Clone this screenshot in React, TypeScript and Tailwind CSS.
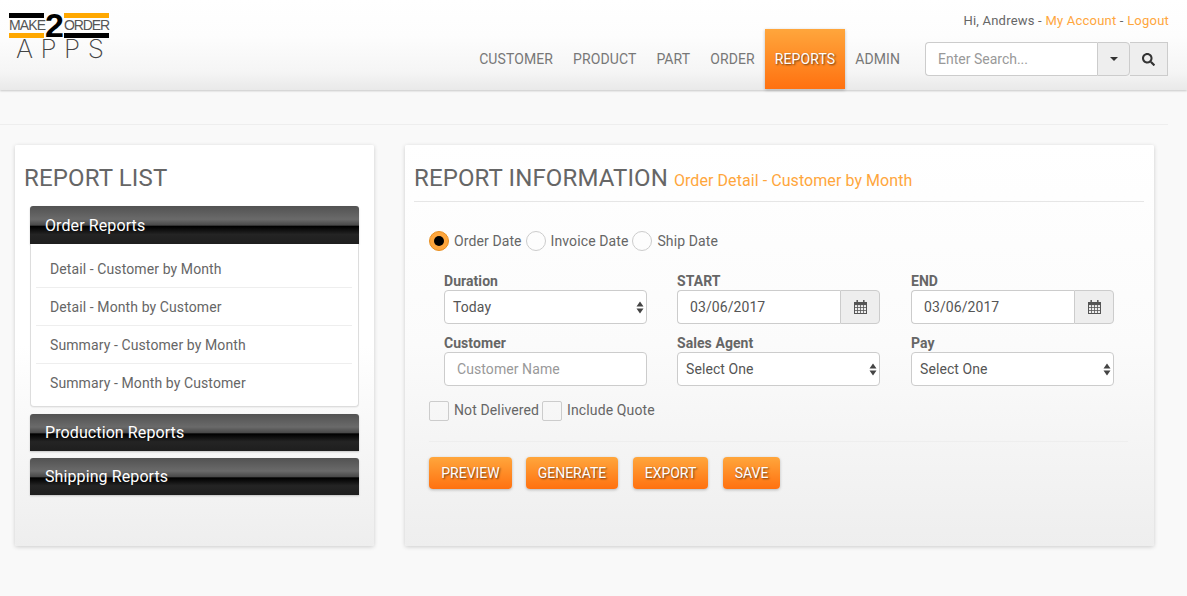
import React from "react";
import { FaSearch } from "react-icons/fa";

const nav = ["CUSTOMER", "PRODUCT", "PART", "ORDER", "REPORTS", "ADMIN"];
const reports = ["Detail - Customer by Month", "Detail - Month by Customer", "Summary - Customer by Month", "Summary - Month by Customer"];
const heading = "flex items-center pl-[15.5px] text-white text-[16px] rounded-t-[3px] tracking-[0.1px] bg-[linear-gradient(#525252_0%,#6a6a6a_35%,#4a4a4a_50%,#000_54%,#242424_75%,#1e1e1e_100%)] shadow-[0_1px_2px_rgba(0,0,0,0.2)]";
const field = "h-[34px] border border-[#ccc] rounded-[4px] bg-white text-[14px] text-[#555] tracking-[0.08px]";
const btn = "h-[32px] rounded-[4px] text-white text-[14px] flex items-center justify-center bg-[linear-gradient(#ffa63c,#ff7110)] shadow-[0_1px_3px_rgba(0,0,0,0.25)] [text-shadow:1px_1px_2px_rgba(0,0,0,0.6)]";

function Arrows() {
  return (
    <svg className="absolute right-[2px] top-[10px] w-[8px] h-[13px]" viewBox="0 0 8 13">
      <path d="M4 0.5 L7.5 5.5 H0.5 Z M4 12.5 L0.5 7.5 H7.5 Z" fill="#444" />
    </svg>
  );
}

function Calendar() {
  return (
    <svg width="13" height="14" viewBox="0 0 13 14" fill="none" stroke="#555" strokeWidth="1">
      <rect x="0.5" y="2.5" width="12" height="11" />
      <path d="M0.5 4 H12.5" strokeWidth="2.2" />
      <path d="M0.5 7.5 H12.5 M0.5 10.5 H12.5 M3.5 5 V13.5 M6.5 5 V13.5 M9.5 5 V13.5" strokeWidth="0.8" />
      <path d="M3.2 0 V3 M9.8 0 V3" strokeWidth="1.5" />
    </svg>
  );
}

function Select({ value }: { value: string }) {
  return (
    <div className={`${field} relative flex items-center pl-[8px] pr-[2px]`}>
      <span>{value}</span>
      <Arrows />
    </div>
  );
}

function DateField() {
  return (
    <div className="flex h-[34px] text-[14px] text-[#555] tracking-[0.08px]">
      <div className="flex-1 border border-r-0 border-[#ccc] rounded-l-[4px] bg-white flex items-center pl-[12px]">03/06/2017</div>
      <div className="w-[40px] border border-[#ccc] rounded-r-[4px] bg-[#eee] flex items-center justify-center">
        <Calendar />
      </div>
    </div>
  );
}

function Radio({ label, checked }: { label: string; checked?: boolean }) {
  return (
    <div className="flex items-center gap-[5px]">
      {checked ? (
        <span className="w-[20px] h-[20px] rounded-full border border-[#e88f20] bg-[#ffa63c] flex items-center justify-center">
          <span className="w-[10px] h-[10px] rounded-full bg-black" />
        </span>
      ) : (
        <span className="w-[20px] h-[20px] rounded-full border border-[#ccc]" />
      )}
      <span className="tracking-[0.1px]">{label}</span>
    </div>
  );
}

function Check({ label }: { label: string }) {
  return (
    <div className="flex items-center gap-[5px]">
      <span className="w-[20px] h-[20px] rounded-[2px] border border-[#ccc]" />
      <span className="tracking-[0.12px] pb-[2px]">{label}</span>
    </div>
  );
}

function Field({ label, children }: { label: string; children: React.ReactNode }) {
  return (
    <div className="w-[203px]">
      <div className="h-[20px] text-[14px] font-bold text-[#666] leading-[20px] -mb-[1px] tracking-[0.06px]">{label}</div>
      {children}
    </div>
  );
}

function Logo() {
  return (
    <div className="ml-[9px] mt-[13px] w-[100px] font-['Liberation_Sans',sans-serif]">
      <div className="flex h-[25px] items-stretch">
        <div className="w-[35px] flex flex-col justify-between">
          <div className="h-[5px] bg-black" />
          <div className="text-[14px] leading-[13px] text-[#555] tracking-[-0.9px] whitespace-nowrap">MAKE</div>
          <div className="h-[5px] bg-[#ffa800]" />
        </div>
        <div className="w-[19px] ml-[1px] text-[34px] font-bold leading-[24px] text-black text-center">2</div>
        <div className="w-[45px] flex flex-col justify-between">
          <div className="h-[5px] bg-[#ffa800]" />
          <div className="text-[14px] leading-[13px] text-[#555] tracking-[-1.1px] whitespace-nowrap">ORDER</div>
          <div className="h-[5px] bg-black" />
        </div>
      </div>
      <div className="pl-[7px] text-[26px] leading-[21px] text-[#444] font-['Inter',sans-serif] font-extralight tracking-[7.5px] whitespace-nowrap">APPS</div>
    </div>
  );
}

export default function App() {
  return (
    <div className="h-[596px] overflow-hidden bg-[#f9f9f9] font-['Roboto',sans-serif] text-[#666] text-[14px]">
      <header className="h-[90px] flex justify-between bg-[linear-gradient(#fff_0%,#fdfdfd_40%,#f5f5f5_80%,#e9e9e9_100%)] shadow-[0_1px_2px_rgba(0,0,0,0.2)]">
        <Logo />
        <div className="pr-[19px] flex flex-col items-end">
          <div className="h-[29px] pt-[12px] -mr-[1px] leading-[18px] text-[13px] text-[#666] tracking-[0.22px]">
            Hi, Andrews - <span className="text-[#ffa63c]">My Account</span> - <span className="text-[#ffa63c]">Logout</span>
          </div>
          <div className="flex items-start">
            <nav className="flex h-[60px] tracking-[0.1px] -mr-[1px]">
              {nav.map((n) =>
                n === "REPORTS" ? (
                  <div key={n} className="px-[10px] flex items-center text-white bg-[linear-gradient(#ffa63c,#ff7110)] shadow-[0_1px_3px_rgba(0,0,0,0.25)] [text-shadow:1px_1px_2px_rgba(0,0,0,0.6)]">{n}</div>
                ) : (
                  <div key={n} className="px-[10px] flex items-center text-[#777]">{n}</div>
                )
              )}
            </nav>
            <div className="ml-[16px] mt-[13px] flex h-[34px]">
              <div className="w-[172px] border border-r-0 border-[#ccc] rounded-l-[4px] bg-white flex items-center pl-[12px] text-[#999]">Enter Search...</div>
              <div className="w-[33px] border border-[#ccc] rounded-r-[4px] bg-[#eee] flex items-center justify-center">
                <svg width="8" height="4" viewBox="0 0 8 4"><path d="M0 0 H8 L4 4 Z" fill="#333" /></svg>
              </div>
              <div className="w-[38px] border border-l-0 border-[#ccc] bg-[#eee] flex items-center justify-center text-[#333]">
                <FaSearch size={13} />
              </div>
            </div>
          </div>
        </div>
      </header>

      <div className="h-[35px] w-[1168px] border-b border-[#eee]" />

      <main className="mt-[20px] pl-[15px] flex gap-[31px] items-start">
        <section className="w-[359px] h-[401px] rounded-[2px] pt-[19px] px-[9px] bg-[linear-gradient(#fff_0%,#fff_50%,#eee_100%)] shadow-[0_1px_4px_rgba(0,0,0,0.18)]">
          <h2 className="text-[24px] leading-[28px] text-[#666] tracking-[0.15px]">REPORT LIST</h2>
          <div className="mt-[14px] ml-[5.5px] w-[329px] flex flex-col gap-[7px]">
            <div>
              <div className={`${heading} h-[38px] pt-[1px]`}>Order Reports</div>
              <div className="h-[163px] bg-white rounded-b-[4px] border border-t-0 border-[#ddd] pl-[5px] pr-[6px] pt-[6px] shadow-[0_1px_1px_rgba(0,0,0,0.05)]">
                {reports.map((r, i) => (
                  <div key={r} className={`h-[38px] pl-[14.5px] pt-[1px] flex items-center tracking-[0.1px] text-[#666] ${i < 3 ? "border-b border-[#eee]" : ""}`}>{r}</div>
                ))}
              </div>
            </div>
            <div className={`${heading} h-[37px]`}>Production Reports</div>
            <div className={`${heading} h-[37px]`}>Shipping Reports</div>
          </div>
        </section>

        <section className="w-[749px] h-[401px] rounded-[2px] pt-[19px] px-[9px] bg-[linear-gradient(#fff_0%,#fbfbfb_50%,#eee_100%)] shadow-[0_1px_4px_rgba(0,0,0,0.18)]">
          <div className="flex items-baseline gap-[6px] w-[730px] h-[38px] border-b border-[#e6e6e6]">
            <h2 className="text-[24px] leading-[28px] text-[#666] tracking-[0.12px]">REPORT INFORMATION</h2>
            <span className="text-[16px] text-[#ffa63c] tracking-[0.07px]">Order Detail - Customer by Month</span>
          </div>
          <div className="pl-[15px] w-[730px]">
            <div className="mt-[29px] flex items-center gap-[4px] h-[20px]">
              <Radio label="Order Date" checked />
              <Radio label="Invoice Date" />
              <Radio label="Ship Date" />
            </div>
            <div className="mt-[20px] ml-[15px] grid grid-cols-[233px_234px_203px] gap-y-[9px] text-[14px]">
              <Field label="Duration"><Select value="Today" /></Field>
              <Field label="START"><DateField /></Field>
              <Field label="END"><DateField /></Field>
              <Field label="Customer">
                <div className={`${field} flex items-center pl-[12px] text-[#999]`}>Customer Name</div>
              </Field>
              <Field label="Sales Agent"><Select value="Select One" /></Field>
              <Field label="Pay"><Select value="Select One" /></Field>
            </div>
            <div className="mt-[15px] flex items-center gap-[3px] h-[20px]">
              <Check label="Not Delivered" />
              <Check label="Include Quote" />
            </div>
            <div className="mt-[20px] w-[699px] border-t border-[#eee]" />
            <div className="mt-[15px] flex">
              <div className={`${btn} w-[83px]`}>PREVIEW</div>
              <div className={`${btn} w-[92px] ml-[14px]`}>GENERATE</div>
              <div className={`${btn} w-[75px] ml-[15px]`}>EXPORT</div>
              <div className={`${btn} w-[57px] ml-[15px]`}>SAVE</div>
            </div>
          </div>
        </section>
      </main>
    </div>
  );
}
